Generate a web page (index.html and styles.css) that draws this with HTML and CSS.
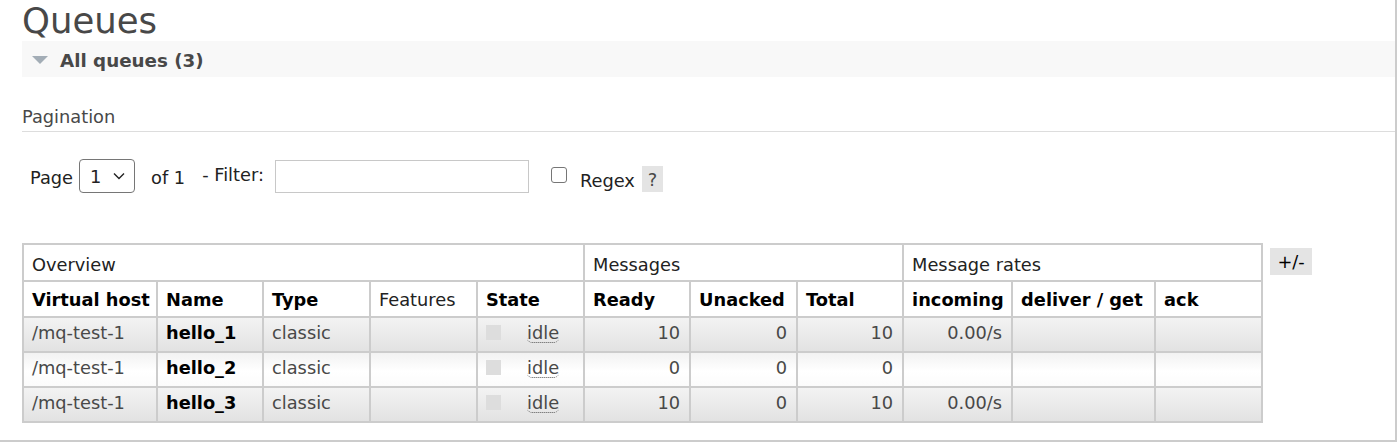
FILE: index.html
```html
<!DOCTYPE html>
<html>
<head>
<meta charset="utf-8">
<link rel="stylesheet" href="styles.css">
</head>
<body>
<div class="main">
  <h1 class="title">Queues</h1>
  <div class="section-head">
    <span class="triangle"></span>
    <h2 class="section-title">All queues (3)</h2>
  </div>
  <div class="pagination-title">Pagination</div>
  <div class="filter-row">
    <span class="lbl">Page</span>
    <span class="select"><span class="select-val">1</span>
      <svg class="chev" width="12" height="8" viewBox="0 0 12 8"><path d="M1 1.5 L6 6.5 L11 1.5" fill="none" stroke="#222" stroke-width="1.4"/></svg>
    </span>
    <span class="lbl of">of 1</span>
    <span class="lbl filter">- Filter:</span>
    <span class="input"></span>
    <span class="checkbox"></span>
    <span class="lbl regex">Regex</span>
    <span class="help">?</span>
  </div>
  <div class="table-row">
    <table class="list">
      <colgroup>
        <col class="c1"><col class="c2"><col class="c3"><col class="c4"><col class="c5">
        <col class="c6"><col class="c7"><col class="c8">
        <col class="c9"><col class="c10"><col class="c11">
      </colgroup>
      <thead>
        <tr class="group">
          <th colspan="5">Overview</th>
          <th colspan="3">Messages</th>
          <th colspan="3">Message rates</th>
        </tr>
        <tr class="cols">
          <th>Virtual host</th>
          <th>Name</th>
          <th>Type</th>
          <th class="plain">Features</th>
          <th>State</th>
          <th>Ready</th>
          <th>Unacked</th>
          <th>Total</th>
          <th>incoming</th>
          <th>deliver / get</th>
          <th>ack</th>
        </tr>
      </thead>
      <tbody>
        <tr class="odd">
          <td>/mq-test-1</td>
          <td class="name">hello_1</td>
          <td>classic</td>
          <td></td>
          <td><span class="state"><span class="sq"></span><abbr class="idle">idle</abbr></span></td>
          <td class="r">10</td>
          <td class="r">0</td>
          <td class="r">10</td>
          <td class="r">0.00/s</td>
          <td></td>
          <td></td>
        </tr>
        <tr class="even">
          <td>/mq-test-1</td>
          <td class="name">hello_2</td>
          <td>classic</td>
          <td></td>
          <td><span class="state"><span class="sq"></span><abbr class="idle">idle</abbr></span></td>
          <td class="r">0</td>
          <td class="r">0</td>
          <td class="r">0</td>
          <td class="r"></td>
          <td></td>
          <td></td>
        </tr>
        <tr class="odd">
          <td>/mq-test-1</td>
          <td class="name">hello_3</td>
          <td>classic</td>
          <td></td>
          <td><span class="state"><span class="sq"></span><abbr class="idle">idle</abbr></span></td>
          <td class="r">10</td>
          <td class="r">0</td>
          <td class="r">10</td>
          <td class="r">0.00/s</td>
          <td></td>
          <td></td>
        </tr>
      </tbody>
    </table>
    <span class="toggle">+/-</span>
  </div>
</div>
</body>
</html>
```
FILE: styles.css
```css
html, body {
  margin: 0;
  padding: 0;
  background: #fff;
}
body {
  font-family: "DejaVu Sans", Verdana, sans-serif;
  font-size: 17.8px;
  color: #484848;
}
.main {
  box-sizing: border-box;
  width: 1397px;
  height: 442px;
  border-right: 2px solid #ccc;
  border-bottom: 2px solid #ccc;
  padding-left: 22px;
  overflow: hidden;
}
.title {
  margin: 0;
  padding-top: 1px;
  font-size: 35.5px;
  line-height: 40px;
  font-weight: normal;
  color: #484848;
}
.section-head {
  display: flex;
  align-items: center;
  height: 36px;
  background: #f8f8f8;
  padding-left: 10px;
}
.triangle {
  width: 0;
  height: 0;
  border-left: 8px solid transparent;
  border-right: 8px solid transparent;
  border-top: 8px solid #a3adb6;
  margin-top: 2px;
}
.section-title {
  margin: 0 0 0 12px;
  padding-top: 3px;
  font-size: 18.3px;
  font-weight: bold;
  color: #484848;
}
.pagination-title {
  margin-top: 29px;
  line-height: 21px;
  padding-bottom: 4px;
  border-bottom: 1px solid #ddd;
}
.filter-row {
  display: flex;
  align-items: flex-start;
  margin-top: 27px;
  height: 34px;
  padding-left: 8px;
}
.lbl {
  line-height: 21px;
  color: #222;
  margin-top: 8px;
}
.select {
  box-sizing: border-box;
  display: flex;
  align-items: center;
  width: 56px;
  height: 34px;
  margin-left: 6px;
  border: 1px solid #767676;
  border-radius: 4px;
  padding-left: 10px;
  color: #222;
}
.select-val {
  flex: 1;
}
.chev {
  margin-right: 9px;
}
.lbl.of {
  margin-left: 16px;
}
.lbl.filter {
  margin-left: 17px;
  margin-top: 5px;
}
.input {
  box-sizing: border-box;
  width: 254px;
  height: 33px;
  margin-left: 11px;
  margin-top: 1px;
  border: 1px solid #c8c8c8;
  background: #fff;
}
.checkbox {
  box-sizing: border-box;
  width: 16px;
  height: 16px;
  margin-left: 22px;
  margin-top: 8px;
  border: 1px solid #767676;
  border-radius: 3px;
}
.lbl.regex {
  margin-left: 13px;
  margin-top: 11px;
}
.help {
  display: flex;
  align-items: center;
  justify-content: center;
  width: 21px;
  height: 26px;
  margin-left: 7px;
  margin-top: 7px;
  background: #e4e4e4;
  color: #484848;
}
.table-row {
  display: flex;
  align-items: flex-start;
  margin-top: 50px;
}
table.list {
  width: 1241px;
  table-layout: fixed;
  border-collapse: separate;
  border-spacing: 0;
  border: 1px solid #ccc;
}
.c1 { width: 134px; }
.c2 { width: 106px; }
.c3 { width: 107px; }
.c4 { width: 107px; }
.c5 { width: 107px; }
.c6 { width: 106px; }
.c7 { width: 107px; }
.c8 { width: 106px; }
.c9 { width: 109px; }
.c10 { width: 143px; }
.c11 { width: 107px; }
table.list th,
table.list td {
  border: 1px solid #ccc;
  height: 20px;
  line-height: 20px;
  padding: 9px 9px 5px 8px;
  text-align: left;
  white-space: nowrap;
  overflow: hidden;
}
table.list th {
  background: #fff;
  color: #000;
  font-weight: bold;
}
table.list tr.group th {
  padding-top: 10px;
  padding-bottom: 5px;
}
table.list tr.cols th {
  padding-top: 8px;
  padding-bottom: 6px;
}
table.list tr.group th,
table.list th.plain {
  font-weight: normal;
  color: #222;
}
table.list td {
  color: #484848;
  padding-top: 5px;
  padding-bottom: 8px;
}
table.list td.name {
  color: #000;
  font-weight: bold;
}
table.list td.r {
  text-align: right;
}
tr.odd td {
  background: linear-gradient(to bottom, #f3f3f3, #e2e2e2);
}
tr.even td {
  background: linear-gradient(to bottom, #f2f2f2, #ffffff 55%, #fbfbfb);
}
.state {
  display: flex;
  align-items: center;
}
.sq {
  width: 15px;
  height: 15px;
  background: #dddddd;
  margin-right: 26px;
  margin-top: -2px;
}
.idle {
  text-decoration: none;
  border-bottom: 1px dotted #555;
  border-radius: 5px;
  line-height: 19px;
  color: #484848;
}
.toggle {
  display: flex;
  align-items: center;
  justify-content: center;
  width: 42px;
  height: 27px;
  margin-left: 7px;
  margin-top: 5px;
  background: #e4e4e4;
  color: #000;
}
```
